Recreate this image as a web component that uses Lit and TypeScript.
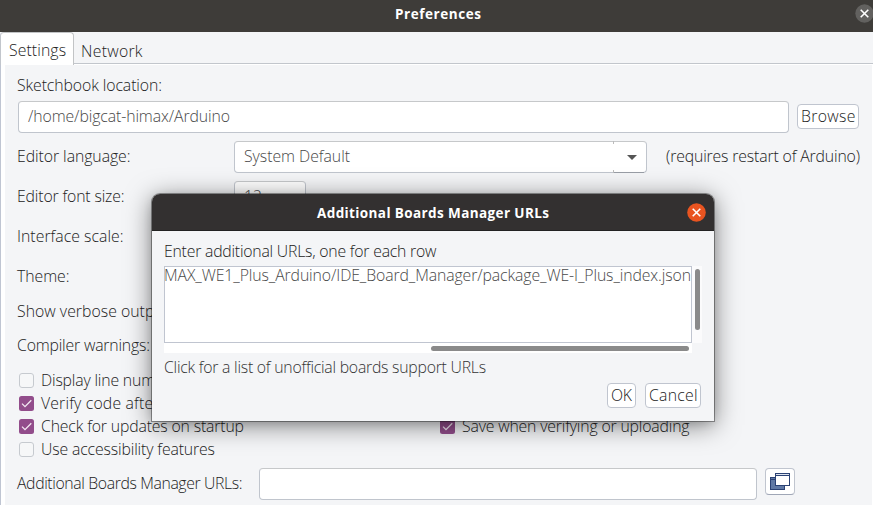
import { LitElement, html, css, svg } from "lit";
import { customElement, property } from "lit/decorators.js";

/** A single line of text tracked so that it occupies a given width. */
@customElement("fit-text")
class FitText extends LitElement {
  @property() text = "";
  @property({ type: Number }) width = 0;

  static styles = css`
    :host { display: block; flex: none; height: 20px; line-height: inherit; white-space: pre; }
    .run { display: inline-block; }
  `;

  updated() {
    const run = this.renderRoot.querySelector(".run") as HTMLElement;
    run.style.letterSpacing = "0px";
    const natural = run.getBoundingClientRect().width;
    const gaps = Math.max(1, this.text.length - 1);
    run.style.letterSpacing = `${((this.width - natural) / gaps).toFixed(3)}px`;
  }

  render() {
    return html`<span class="run">${this.text}</span>`;
  }
}

const t = (text: string, width: number) =>
  html`<fit-text .text=${text} .width=${width}></fit-text>`;

const cross = svg`<path d="M5.4 5.4 L12.6 12.6 M12.6 5.4 L5.4 12.6" stroke="#fff" stroke-width="1.5" fill="none"/>`;

const check = (on: boolean) => html`
  <svg class="box" width="15" height="15" viewBox="0 0 15 15">
    ${on
      ? svg`<rect width="15" height="15" rx="2.5" fill="#924d8b"/><path d="M3 7.6 L6 10.6 L12.3 4.3" fill="none" stroke="#f4e9f3" stroke-width="1.3"/>`
      : svg`<rect x=".5" y=".5" width="14" height="14" rx="2.5" fill="#f6f7f8" stroke="#c6cacf"/>`}
  </svg>`;

@customElement("app-root")
class AppRoot extends LitElement {
  static styles = css`
    * { box-sizing: border-box; }
    :host {
      display: block; position: relative; width: 873px; height: 505px; overflow: hidden;
      background: #f4f5f7; color: #222;
      font: 300 15.8px/20px "Open Sans", "Noto Sans", sans-serif;
    }
    .title {
      height: 32px; background: #3e3c39; color: #fff; display: grid;
      grid-template-columns: 395px 1fr 18.5px; padding-top: 4px;
      font: 700 13.5px/20px "Open Sans", "Noto Sans", sans-serif;
    }
    .title > :first-child { grid-column: 2; }
    .close { display: block; }
    .tabs { height: 33px; display: flex; background: linear-gradient(#f4f5f7 31px, #c2c6cc 31px 32px, #fff 32px); }
    .tab { height: 32px; padding: 9px 0 0 7px; }
    .tab.on {
      width: 74px; height: 33px; padding: 7px 0 0 8px; background: #fff; border: 1px solid #c2c4c6;
      border-left-color: #c2c6cc; border-bottom: 0; border-radius: 4px 4px 0 0;
    }
    .body {
      height: 440px; border-left: 1px solid #bfc5d2; border-right: 1px solid #fff;
      box-shadow: inset 4px 0 #fff; padding: 10px 0 0 16px;
    }
    .row { display: flex; height: 40px; align-items: flex-start; }
    .row.first { height: 26px; }
    .row.short { height: 34px; }
    .row.last { height: 35px; }
    .lab { width: 217px; padding-top: 5px; flex: none; }
    .lab.wide { width: 242px; }
    .short .lab, .last .lab { padding-top: 0; }
    .field {
      height: 32px; background: #fff; border: 1px solid #c0c5cd; border-top-color: #c6c8ca;
      border-radius: 4px; padding: 4px 0 0 9px; color: #484848; flex: none;
    }
    .path { width: 771px; margin-left: 1px; padding-top: 4px; }
    .combo { width: 413px; display: flex; justify-content: space-between; }
    .arrow { height: 32px; width: 34px; margin: -5px -1px 0 0; flex: none; }
    .note { padding: 5px 0 0 19px; }
    .size { width: 72px; }
    .urls { width: 498px; }
    .btn {
      height: 25px; background: #fff; border: 1px solid #c0c5cf; border-radius: 4px;
      padding: 1px 0 0 3px; flex: none;
    }
    .browse { width: 62px; margin: 3px 0 0 8px; }
    .icon { width: 30px; height: 27px; margin-left: 8px; padding: 4px; border-bottom-color: #9fa6b6; }
    .icon svg { display: block; }
    .checks { display: grid; grid-template-columns: 421px 1fr; grid-auto-rows: 23px; padding-left: 2px; }
    .opt { display: flex; gap: 7px; }
    .box { margin-top: 3px; flex: none; }
    .row.extra { margin-top: 6px; }
    .dialog {
      position: absolute; left: 152px; top: 194px; width: 562px; height: 227px;
      background: #f4f5f7; border-radius: 8px 8px 0 0;
      box-shadow: 0 0 0 1px rgba(0,0,0,.36), 0 4px 26px rgba(0,0,0,.5), 0 2px 10px rgba(0,0,0,.12);
    }
    .head {
      height: 37px; background: #333030; color: #fff; border-bottom: 1px solid #222; border-radius: 8px 8px 0 0;
      display: flex; justify-content: space-between; padding: 9px 8.5px 0 165px;
      font: 700 13.5px/20px "Open Sans", "Noto Sans", sans-serif;
    }
    .inner { padding: 10px 12px 0 12px; }
    .scroll { display: grid; grid-template-columns: 528px 10px; grid-template-rows: 77px 10px; margin-top: 5px; }
    .area { background: #fff; border: 1px solid #c0c5d0; color: #484848; }
    .area fit-text { margin: -2px 0 0 -1px; }
    .rail { background: #fbfbfc; padding: 3px 2px 0 3px; }
    .rail.h { padding: 3px 3px 0 267px; background: #fff; }
    .thumb { background: #8a8a8a; border-radius: 3px; height: 61px; }
    .h .thumb { height: 5px; }
    .hint { margin-top: 4px; color: #333; }
    .acts { display: flex; justify-content: flex-end; gap: 9px; margin-top: 6px; padding-right: 1px; }
    .ok { width: 29px; }
    .cancel { width: 56px; }
  `;

  render() {
    return html`
      <div class="title">
        ${t("Preferences", 86)}
        <svg class="close" width="19" height="19" viewBox="0 0 18 18">
          <circle cx="9" cy="9" r="8.7" fill="#62615f"/>${cross}
        </svg>
      </div>
      <div class="tabs">
        <div class="tab on">${t("Settings", 57)}</div>
        <div class="tab">${t("Network", 61.5)}</div>
      </div>
      <div class="body">
        <div class="row first">${t("Sketchbook location:", 145)}</div>
        <div class="row">
          <div class="field path">${t("/home/bigcat-himax/Arduino", 202)}</div>
          <div class="btn browse">${t("Browse", 54.5)}</div>
        </div>
        <div class="row">
          <div class="lab">${t("Editor language:", 113.5)}</div>
          <div class="field combo">
            ${t("System Default", 106)}
            <svg class="arrow" viewBox="0 0 34 32" width="34" height="32">
              <path d="M.5 0V3M.5 29V32" stroke="#bbb"/>
              <path d="M14 14h10l-5 5z" fill="#555"/>
              <path d="M1 31.5H31" stroke="#999ea6"/>
            </svg>
          </div>
          <div class="note">${t("(requires restart of Arduino)", 194)}</div>
        </div>
        <div class="row">
          <div class="lab">${t("Editor font size:", 107.5)}</div>
          <div class="field size">${t("12", 18)}</div>
        </div>
        <div class="row"><div class="lab">${t("Interface scale:", 106.5)}</div></div>
        <div class="row"><div class="lab">${t("Theme:", 52.5)}</div></div>
        <div class="row short"><div class="lab">${t("Show verbose output", 152)}</div></div>
        <div class="row last"><div class="lab">${t("Compiler warnings:", 133)}</div></div>
        <div class="checks">
          <div class="opt">${check(false)}${t("Display line numbers", 145)}</div><span></span>
          <div class="opt">${check(true)}${t("Verify code after upload", 173)}</div><span></span>
          <div class="opt">${check(true)}${t("Check for updates on startup", 203)}</div>
          <div class="opt">${check(true)}${t("Save when verifying or uploading", 227.5)}</div>
          <div class="opt">${check(false)}${t("Use accessibility features", 174)}</div><span></span>
        </div>
        <div class="row extra">
          <div class="lab wide">${t("Additional Boards Manager URLs:", 225.5)}</div>
          <div class="field urls"></div>
          <div class="btn icon">
            <svg width="20" height="18" viewBox="0 0 20 18">
              <rect x=".5" y="4.5" width="14" height="12" fill="#6079a5" stroke="#2b4274"/>
              <path d="M1 6.5H5" stroke="#2b4274"/>
              <rect x="5.5" y=".5" width="14" height="12" fill="#fff" stroke="#2b4274"/>
              <path d="M6 1.5H19" stroke="#dfe5f0"/>
              <path d="M6 2.5H19" stroke="#2b4274"/>
            </svg>
          </div>
        </div>
      </div>
      <div class="dialog">
        <div class="head">
          ${t("Additional Boards Manager URLs", 232)}
          <svg class="close" width="19" height="19" viewBox="0 0 18 18">
            <circle cx="9" cy="9" r="8.8" fill="#e95420"/>${cross}
          </svg>
        </div>
        <div class="inner">
          ${t("Enter additional URLs, one for each row", 272.5)}
          <div class="scroll">
            <div class="area">${t("MAX_WE1_Plus_Arduino/IDE_Board_Manager/package_WE-I_Plus_index.json", 527)}</div>
            <div class="rail"><div class="thumb"></div></div>
            <div class="rail h"><div class="thumb"></div></div>
          </div>
          <div class="hint">${t("Click for a list of unofficial boards support URLs", 322)}</div>
          <div class="acts">
            <div class="btn ok">${t("OK", 21)}</div>
            <div class="btn cancel">${t("Cancel", 48.5)}</div>
          </div>
        </div>
      </div>
    `;
  }
}
